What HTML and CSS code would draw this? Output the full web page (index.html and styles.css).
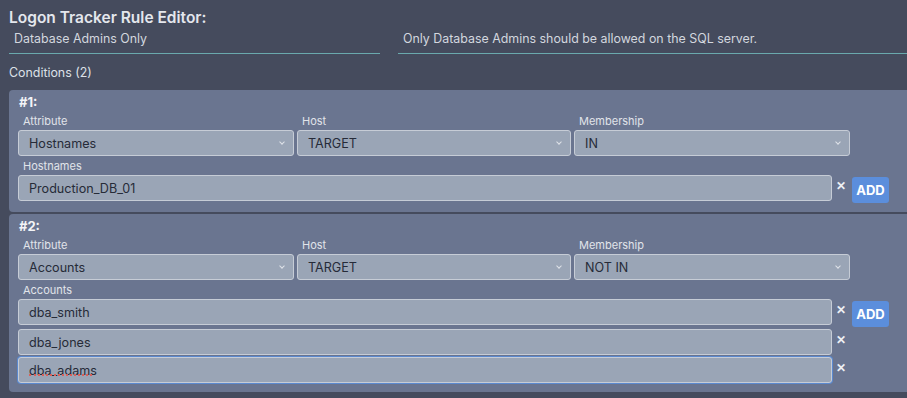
FILE: index.html
```html
<!DOCTYPE html>
<html lang="en">
<head>
  <meta charset="UTF-8" />
  <meta name="viewport" content="width=device-width, initial-scale=1.0"/>
  <title>Logon Tracker Rule Editor</title>
  <link rel="stylesheet" href="styles.css">
</head>
<body>
  <div class="editor">
    <h1 class="editor-title">Logon Tracker Rule Editor:</h1>

    <div class="rule-fields">
      <input type="text" class="rule-name" value="Database Admins Only" />
      <input type="text" class="rule-desc" value="Only Database Admins should be allowed on the SQL server." />
    </div>

    <div class="conditions-title">Conditions (2)</div>

    <div class="condition">
      <div class="condition-num">#1:</div>
      <div class="selects">
        <div class="field">
          <label>Attribute</label>
          <div class="select-wrap">
            <select><option>Hostnames</option></select>
          </div>
        </div>
        <div class="field">
          <label>Host</label>
          <div class="select-wrap">
            <select><option>TARGET</option></select>
          </div>
        </div>
        <div class="field">
          <label>Membership</label>
          <div class="select-wrap">
            <select><option>IN</option></select>
          </div>
        </div>
      </div>
      <label class="values-label">Hostnames</label>
      <div class="value-row">
        <input type="text" class="value-input" value="Production_DB_01" />
        <span class="remove">&#x2715;</span>
        <button type="button" class="add-btn">ADD</button>
      </div>
    </div>

    <div class="condition">
      <div class="condition-num">#2:</div>
      <div class="selects">
        <div class="field">
          <label>Attribute</label>
          <div class="select-wrap">
            <select><option>Accounts</option></select>
          </div>
        </div>
        <div class="field">
          <label>Host</label>
          <div class="select-wrap">
            <select><option>TARGET</option></select>
          </div>
        </div>
        <div class="field">
          <label>Membership</label>
          <div class="select-wrap">
            <select><option>NOT IN</option></select>
          </div>
        </div>
      </div>
      <label class="values-label">Accounts</label>
      <div class="value-row">
        <input type="text" class="value-input" value="dba_smith" />
        <span class="remove">&#x2715;</span>
        <button type="button" class="add-btn">ADD</button>
      </div>
      <div class="value-row">
        <input type="text" class="value-input" value="dba_jones" />
        <span class="remove">&#x2715;</span>
      </div>
      <div class="value-row">
        <div class="input-wrap">
          <input type="text" class="value-input focused" value="dba_adams" />
          <span class="spell-mark"></span>
        </div>
        <span class="remove">&#x2715;</span>
      </div>
    </div>
  </div>
</body>
</html>
```

FILE: styles.css
```css
* {
  margin: 0; padding: 0; box-sizing: border-box;
}
html, body {
  overflow: hidden;
}
body {
  font-family: Inter, "Noto Sans", sans-serif;
  background-color: #454b5d;
  color: #e3e6ec;
}
.editor {
  width: 925px;
  padding: 8px 0 0 9px;
}
.editor-title {
  font-size: 15.5px;
  line-height: 20px;
  font-weight: 600;
  color: #e4e7ed;
}
.rule-fields {
  display: flex;
  gap: 18px;
  margin-top: 1px;
}
.rule-fields input {
  height: 25px;
  padding: 2px 5px 7px 5px;
  border: none;
  border-bottom: 1px solid #6aa9ad;
  background: transparent;
  color: #d3d7df;
  font-family: inherit;
  font-size: 12.4px;
  outline: none;
}
.rule-name {
  width: 371px;
}
.rule-desc {
  flex: 1;
}
.conditions-title {
  margin-top: 11px;
  font-size: 12.4px;
  line-height: 16px;
  color: #dde1e8;
}
.condition {
  margin-top: 9px;
  padding: 4px 9px 9px 9px;
  background-color: #6a7590;
  border-radius: 4px;
}
.condition + .condition {
  margin-top: 2px;
}
.condition-num {
  padding-left: 1px;
  font-size: 13px;
  line-height: 17px;
  font-weight: 700;
  color: #f3f4f7;
}
.selects {
  display: grid;
  grid-template-columns: 276px 274px 276px;
  column-gap: 3px;
}
.field label, .values-label {
  display: block;
  padding: 2px 5px 1px;
  font-size: 11px;
  line-height: 16px;
  color: #e1e4ea;
}
.select-wrap, .input-wrap {
  position: relative;
}
.select-wrap::after {
  content: "";
  position: absolute;
  right: 10px;
  top: 10px;
  width: 3px;
  height: 3px;
  border-right: 1px solid #dfe3e9;
  border-bottom: 1px solid #dfe3e9;
  transform: rotate(45deg);
  pointer-events: none;
}
select, .value-input {
  display: block;
  width: 100%;
  height: 26px;
  padding: 0 10px;
  border: 1px solid #c6ccd6;
  border-radius: 3px;
  background-color: #9aa5b6;
  color: #262b38;
  font-family: inherit;
  font-size: 12.6px;
  outline: none;
  appearance: none;
}
.value-row {
  display: flex;
  align-items: flex-start;
}
.value-row + .value-row {
  margin-top: 2px;
}
.value-input {
  width: 814px;
}
.value-input.focused {
  border-color: #c6ccd6;
  box-shadow: 0 0 0 1px #5b89cf;
}
.spell-mark {
  position: absolute;
  left: 11px;
  bottom: 7px;
  width: 63px;
  border-bottom: 2px dotted #d9605a;
}
.remove {
  width: 17px;
  padding-top: 3px;
  text-align: center;
  font-size: 12px;
  line-height: 16px;
  font-weight: 700;
  color: #eef0f4;
}
.add-btn {
  width: 37px;
  height: 26px;
  margin: 2px 0 0 3px;
  border: none;
  border-radius: 3px;
  background-color: #5b8edc;
  color: white;
  font-family: inherit;
  font-size: 13px;
  font-weight: 700;
  cursor: pointer;
}
```
